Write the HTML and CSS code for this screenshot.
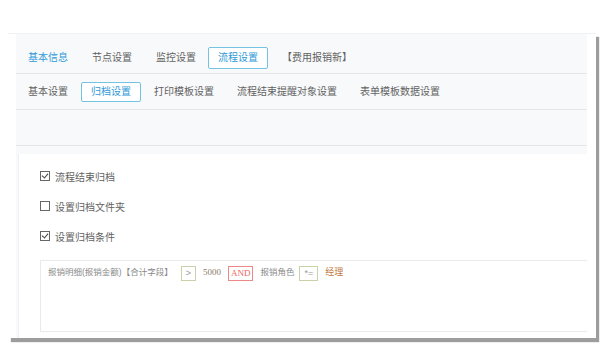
FILE: index.html
```html
<!DOCTYPE html>
<html>
<head>
<meta charset="UTF-8">
<title>流程设置</title>
<link rel="stylesheet" href="styles.css">
</head>
<body>
	<div class="frame">
		<div class="inner">
			<!-- 一级页签 -->
			<div class="tabs top">
				<span class="tab blue">基本信息</span>
				<span class="tab">节点设置</span>
				<span class="tab">监控设置</span>
				<span class="tab active">流程设置</span>
				<span class="tab">【费用报销新】</span>
			</div>
			<!-- 二级页签 -->
			<div class="tabs sub">
				<span class="tab">基本设置</span>
				<span class="tab active">归档设置</span>
				<span class="tab">打印模板设置</span>
				<span class="tab">流程结束提醒对象设置</span>
				<span class="tab">表单模板数据设置</span>
			</div>
			<div class="toolbar"></div>
			<div class="panel">
				<label class="check"><span class="box on"></span>流程结束归档</label>
				<label class="check"><span class="box"></span>设置归档文件夹</label>
				<label class="check"><span class="box on"></span>设置归档条件</label>
				<div class="cond">
					<span class="field">报销明细(报销金额)【合计字段】</span>
					<span class="op first">&gt;</span>
					<span class="val">5000</span>
					<span class="and">AND</span>
					<span class="field">报销角色</span>
					<span class="op second">*=</span>
					<span class="role">经理</span>
				</div>
			</div>
		</div>
	</div>
</body>
</html>
```
FILE: styles.css
```css
body{
	margin:0;
	background:#fff;
	font-family:"Liberation Sans","Noto Sans CJK SC",sans-serif;
	font-size:10px;
	color:#626262;
}
.frame{
	margin:33px 0 13px 8px;
	width:588px;
	height:304px;
	background:#fff;
	box-shadow:3px 4px 1px #9d9d9d;
	border-top:1px solid #eff1f4;
}
.inner{
	margin-left:8px;
	width:571px;
	height:100%;
	background:#f8f9fb;
	display:flex;
	flex-direction:column;
}
.tabs{
	display:flex;
	align-items:center;
	padding-left:2px;
	border-bottom:1px solid #e3e7ec;
}
.tabs.top{
	margin-top:9px;
	height:30px;
	gap:4px;
}
.tabs.sub{
	height:34px;
	gap:3px;
	padding-top:1px;
}
.tab{
	line-height:18px;
	white-space:nowrap;
	padding:0 9px;
	border:1px solid transparent;
	border-radius:2px;
}
.tab.blue{
	color:#2f9ad8;
}
.tab.active{
	color:#2f9ad8;
	border-color:#74c3e3;
	background:#fff;
}
.tabs.top .tab.active{
	padding:1px 9px;
	margin-left:-2px;
}
.toolbar{
	height:35px;
	border-bottom:1px solid #e3e7ec;
}
.panel{
	flex:1;
	margin:8px 0 0 2px;
	background:#fff;
	border-left:1px solid #eef0f5;
	padding:7px 0 0 21px;
	display:flex;
	flex-direction:column;
}
.check{
	display:flex;
	align-items:center;
	height:30px;
}
.box{
	width:8px;
	height:8px;
	border:1px solid #666;
	margin-right:5px;
	position:relative;
}
.box.on::after{
	content:"";
	position:absolute;
	left:2px;
	top:0px;
	width:3px;
	height:5px;
	border:solid #444;
	border-width:0 1.3px 1.3px 0;
	transform:rotate(40deg);
}
.cond{
	box-sizing:border-box;
	margin-top:9px;
	height:72px;
	border:1px solid #e8eaee;
	border-right:none;
	display:flex;
	align-items:flex-start;
	padding:5px 0 0 7px;
	font-size:9px;
	gap:7px;
}
.cond span{
	line-height:13px;
}
.field{
	color:#8a8a8a;
	font-size:8.5px;
}
.op{
	border:1px solid #c8d2a8;
	color:#999;
	padding:0 4px;
}
.op.first{
	margin-left:1px;
}
.op.second{
	margin-left:-2px;
}
.val{
	color:#8a7a66;
	font-family:"Liberation Serif",serif;
}
.and{
	border:1px solid #e88;
	color:#e66;
	padding:0 2px;
	font-family:"Liberation Serif",serif;
}
.role{
	color:#c07840;
}
```
